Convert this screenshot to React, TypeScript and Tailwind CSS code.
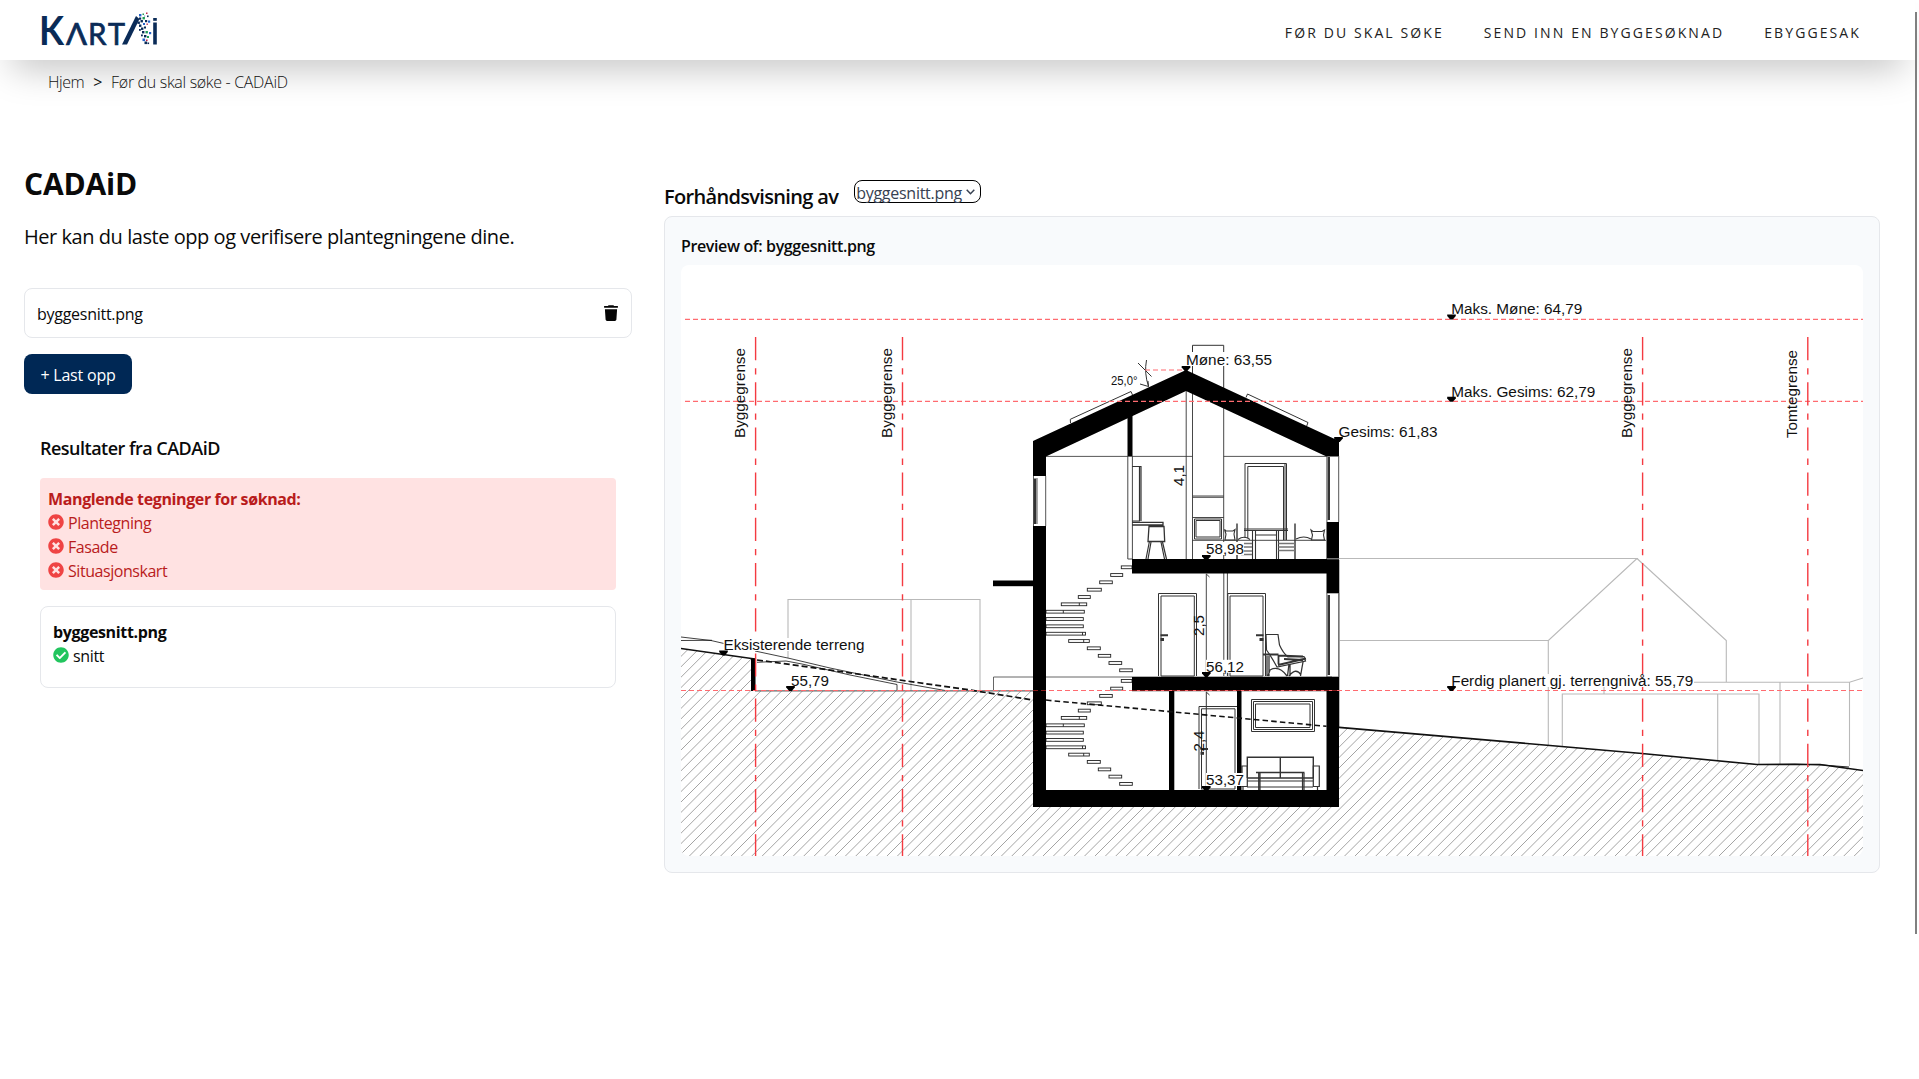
import { FaCheckCircle, FaTimesCircle } from "react-icons/fa";

const navItems = ["Før du skal søke", "Send inn en byggesøknad", "eByggesak"];
const missing = ["Plantegning", "Fasade", "Situasjonskart"];

const logoDots: [number, number, number, string][] = [
  [139, 14, 2.4, "#2563c9"], [142.5, 13.5, 1.5, "#1f9d55"], [146, 12.5, 1.5, "#c0264b"],
  [147, 15.5, 1.6, "#0a2b57"], [144, 15.5, 1.2, "#8aa4c8"], [139, 17.5, 2.2, "#0a2b57"],
  [142.5, 17, 2.4, "#1f9d55"], [140.5, 20, 2.4, "#0a2b57"], [145, 20, 2.2, "#0a2b57"],
  [148, 20.5, 2.2, "#2563c9"], [137.5, 21.5, 2.4, "#0a2b57"], [143, 23, 2, "#2563c9"],
  [146.5, 23.5, 1.4, "#c0264b"], [139, 24.5, 2.4, "#0a2b57"], [141, 27.5, 2.4, "#0a2b57"],
  [144, 26.5, 2, "#0a2b57"], [139, 29, 1.8, "#0a2b57"], [142, 31, 2.4, "#0a2b57"],
  [145.5, 31, 2.4, "#1f9d55"], [149, 32, 2.2, "#2563c9"], [141, 34.5, 1.8, "#0a2b57"],
  [144, 35, 2.4, "#0a2b57"], [147, 36, 2, "#1f9d55"], [142.5, 38.5, 2.6, "#2563c9"],
  [146, 39.5, 1.6, "#c0264b"], [144.5, 41.5, 2.6, "#0a2b57"], [147.5, 42.5, 1.6, "#0a2b57"],
];

function Logo() {
  return (
    <svg className="block overflow-visible" width="124" height="60" viewBox="36 0 124 60" fill="#0a2b57" fontFamily="Lato, sans-serif">
      <text x="39" y="44.5" fontSize="40" fontWeight="700" textLength="25" lengthAdjust="spacingAndGlyphs">K</text>
      <text x="66" y="44.5" fontSize="30" fontWeight="400" stroke="#0a2b57" strokeWidth=".7" textLength="21" lengthAdjust="spacingAndGlyphs">Λ</text>
      <text x="88" y="44.5" fontSize="30" fontWeight="400" stroke="#0a2b57" strokeWidth=".7" textLength="18.5" lengthAdjust="spacingAndGlyphs">R</text>
      <text x="108" y="44.5" fontSize="30" fontWeight="400" stroke="#0a2b57" strokeWidth=".7" textLength="17" lengthAdjust="spacingAndGlyphs">T</text>
      <polygon points="122,44.5 136,16 139.5,19 127,44.5" />
      {logoDots.map(([x, y, s, c], i) => (
        <rect key={i} x={x} y={y} width={s} height={s} fill={c} />
      ))}
      <rect x="153.2" y="18" width="3.6" height="2.8" />
      <rect x="153.2" y="22.5" width="3.6" height="22" />
    </svg>
  );
}

function Trash() {
  return (
    <svg width="14" height="16" viewBox="0 0 14 16" fill="#050505">
      <path d="M4.6 0.2h4.8l.7.9H13.9v1.7H.1V1.1h3.8zM.9 4.2h12.2l-.7 10.3c-.1.9-.7 1.4-1.5 1.4H3.1c-.8 0-1.4-.5-1.5-1.4z" />
    </svg>
  );
}

/* One flight of stairs: [x1, x2, y of the tread, optional divider x] */
const treads: [number, number, number, number?][] = [
  [1121.3, 1132, 567.3], [1110.7, 1122.7, 575], [1099.7, 1112.3, 582.3], [1087.3, 1101.3, 589.7],
  [1078.3, 1090.3, 597], [1061.3, 1086.7, 604.3, 1079.3], [1046, 1084.3, 611.7, 1063.3],
  [1046, 1083.3, 619], [1046, 1083.3, 626.3], [1046, 1085.5, 633.7, 1082.5],
  [1068.7, 1089.3, 641, 1083.7], [1087.3, 1100.3, 648.3], [1098.3, 1110.7, 655.8],
  [1109, 1121.7, 663], [1119.7, 1132.3, 670.3],
];

function Stairs({ dy }: { dy: number }) {
  return (
    <g stroke="#222" strokeWidth=".9" fill="#fff">
      {treads.map(([a, b, y, d]) => (
        <g key={y}>
          <rect x={a} y={y + dy - 1.4} width={b - a} height="2.8" />
          {d && <line x1={d} x2={d} y1={y + dy - 1.4} y2={y + dy + 1.4} />}
        </g>
      ))}
    </g>
  );
}

function Label({ x, y, w, children, bg }: { x: number; y: number; w: number; children: string; bg?: boolean }) {
  return (
    <>
      {bg && <rect x={x} y={y - 12} width={w} height="13" fill="#fff" />}
      <text x={x} y={y} fontSize="15.5" textLength={w} lengthAdjust="spacingAndGlyphs">{children}</text>
    </>
  );
}

function VLabel({ x, y, w, children }: { x: number; y: number; w: number; children: string }) {
  return (
    <text transform={`translate(${x} ${y}) rotate(-90)`} fontSize="15.5" textLength={w} lengthAdjust="spacingAndGlyphs">
      {children}
    </text>
  );
}

function Marker({ x, y }: { x: number; y: number }) {
  return <path d={`M${x - 4.3} ${y - 5}h8.6v1.6l-3 3.4h-2.6l-3-3.4z`} fill="#000" />;
}

const leftGround = "681,648.5 751,658.5 751,691 1033,691 1033,807 1339,807 1339,727 1550,745.5 1642,753.5 1757,764.5 1820,764.5 1863,770.5 1863,856 681,856";
const hatch = Array.from({ length: 136 }, (_, i) => 689.4 - 22 * 10.4 + i * 10.4);

function SectionDrawing() {
  return (
    <svg className="block rounded-lg bg-white" width="1182" height="591" viewBox="681 265 1182 591" fontFamily="'Liberation Sans', Arial, sans-serif" fill="#111">
      <defs>
        <clipPath id="ground">
          <polygon points={leftGround} />
        </clipPath>
      </defs>
      <g clipPath="url(#ground)" stroke="#9a9a9a" strokeWidth=".9">
        {hatch.map((x) => (
          <line key={x} x1={x} y1="856" x2={x + 220} y2="636" />
        ))}
      </g>

      {/* neighbouring buildings */}
      <g stroke="#b9b9b9" strokeWidth="1.1" fill="none">
        <path d="M788 640V599.5H980V691M911 599.5V691M788 640V658" />
        <path d="M1339 558.5H1637L1548.3 640.5V745M1637 558.5L1726.3 640.5V682M1339 640.5H1548.3" />
        <path d="M1562.3 747V694H1759V764M1717.7 694V760M1604 682V694M1694 682.3H1849.5L1863 678M1780 682.3V764M1849.5 682.3V766" />
      </g>
      <path d="M1339.5 560V728" stroke="#b0b0b0" strokeWidth=".9" />

      {/* terrain */}
      <g fill="none" stroke="#111">
        <path d="M681 648.5L755 659" strokeWidth="1.6" />
        <path d="M681 637L711 640.5L724 643.5M681 640.5L712 640.3M755 651L790 658.5L830 668L897 682L945 690.5M757 662.3L786 661L802 664L850 675L897 684.5V691" strokeWidth=".8" />
        <path d="M755 690.8H1033" stroke="#666" strokeWidth="1.2" />
        <path d="M757 660L790 664.5L840 671.5L970 690L1033 700" strokeWidth="1.7" strokeDasharray="6 3" />
        <path d="M1339 727.3L1550 745.5L1642 753.5L1757 764.5H1820L1863 770.5" strokeWidth="1.7" />
        <path d="M1757 764.5L1795 764L1822 765L1849 767" strokeWidth=".9" />
        <path d="M993.5 691V677H1033M1033 677H1132" strokeWidth=".9" stroke="#555" />
      </g>
      <rect x="751" y="658.5" width="4.5" height="32.5" fill="#000" />

      {/* chimney above the roof */}
      <g fill="none" stroke="#333" strokeWidth="1">
        <path d="M1192.5 352V345.3H1223.7V352M1192.5 366V376M1223.7 366V390" />
        <path d="M1070.5 423L1070.3 419.3L1131 391.5L1132.5 395M1246 397.5L1247.5 394L1308 422.5L1306.5 426.5" />
        <path d="M1138 363L1151.5 376.5M1146.5 360Q1144 373 1148.5 386.5M1140 384L1148.5 386.5L1148 381" strokeWidth="1" />
      </g>

      {/* top floor interior */}
      <g fill="none" stroke="#333" strokeWidth=".9">
        <path d="M1046 456.4H1192.5M1223.7 456.4H1327" stroke="#444" />
        <path d="M1192.5 392V559M1223.7 404V559M1186.2 391V559M1192.5 496H1223.7M1192.5 497.3H1223.7M1192.5 517.5H1223.7" />
        <path d="M1194.5 519H1221.5V539H1194.5ZM1196 520.5H1220V537H1196Z" strokeWidth="1" />
        <path d="M1127.8 456V559H1132M1132.4 456V559" />
        <path d="M1132 466.5H1141V521M1132 521H1140M1139.5 467V521" strokeWidth="1.2" />
        <path d="M1132 522.3H1163V525H1132M1149 526.5H1164L1164.7 541.5H1148Z" strokeWidth="1.3" />
        <path d="M1149.3 542L1146 559M1151 542L1148 559M1162.5 542L1166.5 559M1161 542L1164.5 559" strokeWidth="1.2" />
        <path d="M1192.5 540.3H1326" />
        <path d="M1245 538V463.5H1286.5V540M1247.8 538V466.5H1283.5V540M1285 463.5V540" strokeWidth="1" />
        <path d="M1244 529H1288M1244 530.5H1288M1252.5 531V559M1255.5 531V559M1276.5 531V559M1278.5 531V559M1255 535H1277" strokeWidth="1.1" />
        <path d="M1237 523.5V559M1295 523.5V559" strokeWidth="1.4" />
        <path d="M1224.5 529.5L1226 531H1233L1235 529.5L1234 534L1235 540H1225L1226 534ZM1311 530L1313 531.5H1322L1324.5 530L1323.5 535L1324.5 540H1311.5L1312.5 535ZM1238 539.5Q1244 535 1250 539.5M1296 539Q1304 535 1311 539" strokeWidth="1.1" />
        <path d="M1237 543.5H1252M1237 547H1252M1241 551H1252M1241 554.5H1252M1278.5 543.5H1295M1278.5 547H1295M1278.5 550.5H1295" stroke="#777" strokeWidth="1.3" />
      </g>

      <Stairs dy={0} />
      <Stairs dy={113.6} />

      {/* middle floor interior */}
      <g fill="none" stroke="#333" strokeWidth="1">
        <path d="M1158.5 676V593.5H1196.5V676M1161 676V596H1194.3V676H1161M1227.8 676V593.5H1265.5V676M1230 676V596H1263V676H1230" />
        <path d="M1223.8 573V676M1227.4 573V676M1206.3 574V677M1206.3 574L1209.5 577" strokeWidth=".9" />
        <path d="M1160.5 635.3H1168M1256 635.3H1263.5" strokeWidth="2" />
        <path d="M1160.5 639.5H1164M1259.5 639.5H1263.5" strokeWidth="3" />
        <path d="M1266 634.5H1278L1279.5 645Q1283 653 1288 657L1304 656.5L1305.5 661L1277 667Q1271 656 1266.5 650Z" strokeWidth="1.2" />
        <path d="M1263 654.5H1278.5M1278 655.5L1303 656.5M1278 665L1306 658.5M1284 659L1303 660M1278.5 655V664" strokeWidth="1.8" />
        <path d="M1267 656V676M1269 656V676M1289 664L1287.5 676M1290 664V676M1303 662L1300.5 676M1268 676L1270 670Q1279 665 1287 676M1289 676Q1296 667 1301 675" strokeWidth="1.3" />
      </g>

      {/* basement interior */}
      <g fill="none" stroke="#333" strokeWidth="1">
        <path d="M1199 789V706.5H1237M1201.5 789V708.8H1235V789H1201M1206.3 692V790M1206.3 692L1209.5 695" />
        <path d="M1200.5 749H1208" strokeWidth="2" />
        <path d="M1200.5 753.3H1204" strokeWidth="3" />
        <path d="M1251.5 699.5H1314.5V731.5H1251.5ZM1253.5 701.5H1312.5V729.5H1253.5ZM1255.5 704H1310V727.5H1255.5Z" strokeWidth="1" />
        <path d="M1247.3 778V757.3H1313.3V778M1280.3 757.3V778M1247.3 778H1313.3M1256 772.5H1304.5" strokeWidth="1.4" />
        <path d="M1242 766H1247.3V786.5H1242ZM1313.3 766H1319.3V786.5H1313.3ZM1247.3 781H1313.3M1258.7 773V790M1260 773V790M1302.5 773V790M1304 773V790M1243 787V790M1317.5 787V790M1247 787H1313" strokeWidth="1.2" />
      </g>

      {/* cut walls, slabs and roof */}
      <g fill="#000">
        <polygon points="1033,441 1186,370 1339,441 1339,456.5 1326.5,456.5 1186,391 1046,456.5 1046,476 1033,476" />
        <rect x="1033" y="526" width="13" height="281" />
        <rect x="1326.5" y="522" width="12.5" height="71.3" />
        <rect x="1326.5" y="676.7" width="12.5" height="130" />
        <rect x="1132" y="559" width="200" height="14.5" />
        <rect x="1132" y="676.7" width="200" height="14.5" />
        <rect x="1033" y="790" width="306" height="17" />
        <rect x="993" y="580.5" width="42" height="5.7" />
        <rect x="1127.5" y="412" width="5" height="44" />
        <rect x="1169" y="691" width="5.3" height="99" />
        <rect x="1237" y="691" width="4.5" height="84" />
        <rect x="1237" y="786" width="4.5" height="4" />
      </g>
      <g fill="none" stroke="#555" strokeWidth="1">
        <path d="M1033.5 476V526M1045.7 476V526M1037 478V524M1338.7 456V522M1338.7 593V677M1326.9 456V522M1326.9 593V677" />
        <path d="M1035 478.5V524M1328.8 457V520M1328.8 595V675" stroke="#333" strokeWidth="2.4" />
        <path d="M1327 558.8H1339" stroke="#aaa" />
      </g>
      <path d="M1046 700L1050 700.5L1174 712L1326.5 726.3" fill="none" stroke="#111" strokeWidth="1.6" strokeDasharray="5.5 3.2" />

      {/* height lines and property boundaries */}
      <g fill="none" stroke="#ff6b70" strokeWidth="1.2" strokeDasharray="5 3">
        <path d="M685 319.4H1863" />
        <path d="M685 401.4H1863" />
        <path d="M681 690.5H1863" />
        <path d="M1145 370H1184" />
      </g>
      <path d="M1033 690.5H1046M1132 690.5H1339" stroke="#8a1a1a" strokeWidth="1" strokeDasharray="5 3" />
      <g fill="none" stroke="#f43a41" strokeWidth="1.4" strokeDasharray="23.2 8 6.3 7.7">
        <path d="M755.6 337V856" />
        <path d="M902.5 337V856" />
        <path d="M1642.6 337V856" />
        <path d="M1807.8 337V856" />
      </g>

      <Label x={1451.3} y={314} w={131}>Maks. Møne: 64,79</Label>
      <Label x={1451.3} y={397} w={144}>Maks. Gesims: 62,79</Label>
      <Label x={1338.5} y={436.5} w={99}>Gesims: 61,83</Label>
      <Label x={1186} y={365} w={86}>Møne: 63,55</Label>
      <Label x={1451.3} y={686} w={242} bg>Ferdig planert gj. terrengnivå: 55,79</Label>
      <Label x={723.5} y={650} w={141} bg>Eksisterende terreng</Label>
      <Label x={791} y={685.5} w={38}>55,79</Label>
      <Label x={1206} y={554} w={38} bg>58,98</Label>
      <Label x={1206} y={671.8} w={38} bg>56,12</Label>
      <Label x={1206} y={785} w={38} bg>53,37</Label>
      <text x="1111" y="384.5" fontSize="12" textLength="26.5" lengthAdjust="spacingAndGlyphs">25,0°</text>
      <VLabel x={745} y={438} w={90}>Byggegrense</VLabel>
      <VLabel x={892} y={438} w={90}>Byggegrense</VLabel>
      <VLabel x={1632} y={438} w={90}>Byggegrense</VLabel>
      <VLabel x={1797} y={438} w={88}>Tomtegrense</VLabel>
      <VLabel x={1184} y={486} w={21}>4,1</VLabel>
      <VLabel x={1204} y={636} w={21}>2,5</VLabel>
      <VLabel x={1204} y={751.5} w={21}>2,4</VLabel>
      <Marker x={1451.5} y={319.5} />
      <Marker x={1451.5} y={401.8} />
      <Marker x={1338.5} y={442} />
      <Marker x={1186} y={371} />
      <Marker x={1451.5} y={691} />
      <Marker x={723.5} y={655.5} />
      <Marker x={790.5} y={691} />
      <Marker x={1206.3} y={560} />
      <Marker x={1206.3} y={677} />
      <Marker x={1206.3} y={791} />
    </svg>
  );
}

export default function App() {
  return (
    <div className="relative h-[1079px] overflow-hidden bg-white font-['Open_Sans',sans-serif] text-base text-[#0a0a0a]">
      <header className="flex h-[60px] w-[1915px] items-center justify-between bg-white pr-[54px] pl-9 shadow-[0_20px_36px_-12px_rgba(0,0,0,0.25)]">
        <Logo />
        <nav className="mt-[4px] flex gap-10 text-[14px] tracking-[2.1px] text-[#222] uppercase">
          {navItems.map((item) => (
            <a key={item}>{item}</a>
          ))}
        </nav>
      </header>

      <div className="mt-[10px] flex h-6 items-center pl-12 font-light tracking-[-0.32px] text-[#111]">
        <span className="tracking-[-0.45px]">Hjem</span>
        <span className="mr-[9px] ml-[9px] font-normal">&gt;</span>
        <span>Før du skal søke - CADAiD</span>
      </div>

      <main className="flex gap-8 pl-6">
        <section className="w-[608px] pt-[72px]">
          <h1 className="text-[30px] leading-9 font-bold tracking-[-0.2px]">CADAiD</h1>
          <p className="mt-[21px] text-xl leading-7 tracking-[-0.45px]">Her kan du laste opp og verifisere plantegningene dine.</p>

          <div className="mt-[37px] flex h-[50px] items-center justify-between rounded-lg border border-gray-200 pr-[13px] pl-3">
            <span className="mt-[2px] tracking-[-0.27px]">byggesnitt.png</span>
            <Trash />
          </div>

          <button className="mt-4 flex h-10 w-[108px] items-center justify-center rounded-lg bg-[#002855] pt-[2px] tracking-[-0.2px] text-white">
            + Last opp
          </button>

          <div className="px-4 pt-10">
            <h2 className="text-lg leading-7 font-semibold tracking-[-0.51px]">Resultater fra CADAiD</h2>
            <div className="mt-4 rounded bg-red-100 px-2 pt-[9px] pb-[7px] text-[#b91c1c]">
              <p className="leading-6 font-bold tracking-[-0.38px]">Manglende tegninger for søknad:</p>
              {missing.map((item) => (
                <div key={item} className="flex h-6 items-center gap-1 tracking-[-0.45px]">
                  <FaTimesCircle className="mb-0.5 text-[#ef4444]" size={16} />
                  <span>{item}</span>
                </div>
              ))}
            </div>
            <div className="mt-4 h-[82px] rounded-lg border border-gray-200 px-3 pt-[13px]">
              <p className="leading-6 font-bold tracking-[-0.35px]">byggesnitt.png</p>
              <div className="flex h-6 items-center gap-1 tracking-[-0.33px]">
                <FaCheckCircle className="mb-0.5 text-[#22c55e]" size={16} />
                <span>snitt</span>
              </div>
            </div>
          </div>
        </section>

        <section className="w-[1216px] pt-[86px]">
          <div className="flex h-9 items-start">
            <h2 className="mt-[3px] text-xl leading-7 font-semibold tracking-[-0.67px]">Forhåndsvisning av</h2>
            <div className="ml-4 flex h-[23px] w-[127px] items-center justify-between rounded-lg border border-black pr-[5px] pl-[1px] text-[#374151]">
              <span className="mt-[2px] tracking-[-0.27px]">byggesnitt.png</span>
              <svg width="9" height="6" viewBox="0 0 9 6" fill="none" stroke="#374151" strokeWidth="1.5">
                <path d="M.7 .8L4.5 4.7L8.3 .8" />
              </svg>
            </div>
          </div>
          <div className="h-[657px] rounded-lg border border-gray-200 bg-[#f8fafc] px-4 pt-[17px]">
            <h3 className="mb-[7px] leading-6 font-semibold tracking-[-0.37px]">Preview of: byggesnitt.png</h3>
            <SectionDrawing />
          </div>
        </section>
      </main>

      <div className="absolute top-3 left-[1915px] h-[922px] w-[2px] bg-[#808080]" />
    </div>
  );
}
